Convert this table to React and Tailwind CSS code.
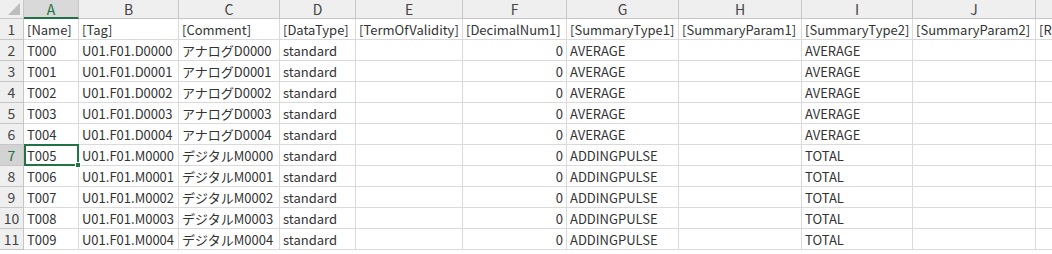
const cols = [
  { key: "A", w: "w-[55px]" },
  { key: "B", w: "w-[100px]" },
  { key: "C", w: "w-[101px]" },
  { key: "D", w: "w-[76px]" },
  { key: "E", w: "w-[107px]" },
  { key: "F", w: "w-[104px]" },
  { key: "G", w: "w-[112px]" },
  { key: "H", w: "w-[123px]" },
  { key: "I", w: "w-[111px]" },
  { key: "J", w: "w-[123px]" },
  { key: "K", w: "w-[60px]" },
];

const header = ["[Name]", "[Tag]", "[Comment]", "[DataType]", "[TermOfValidity]", "[DecimalNum1]", "[SummaryType1]", "[SummaryParam1]", "[SummaryType2]", "[SummaryParam2]", "[R"];

const makeRow = (i) => {
  const analog = i < 5;
  const n = analog ? i : i - 5;
  const num = String(n).padStart(4, "0");
  return [
    "T00" + i,
    analog ? "U01.F01.D" + num : "U01.F01.M" + num,
    analog ? "アナログD" + num : "デジタルM" + num,
    "standard",
    "",
    "0",
    analog ? "AVERAGE" : "ADDINGPULSE",
    "",
    analog ? "AVERAGE" : "TOTAL",
    "",
    "",
  ];
};

const rows = [header, ...Array.from({ length: 10 }, (_, i) => makeRow(i))];

export default function App() {
  return (
    <div
      className="w-[1052px] h-[254px] overflow-hidden bg-white text-[#333] text-[13px]"
      style={{ fontFamily: '"Noto Sans CJK JP", "Noto Sans", sans-serif' }}
    >
      {/* column letters */}
      <div className="flex h-[19px]">
        <div className="relative w-[24px] shrink-0 bg-[#efefef] border-r border-b border-[#c6c6c6]">
          <svg className="absolute right-[3px] bottom-[3px]" width="12" height="12" viewBox="0 0 12 12">
            <polygon points="12,0 12,12 0,12" fill="#bdbdbd" />
          </svg>
        </div>
        {cols.map((c) => (
          <div
            key={c.key}
            className={
              "shrink-0 flex items-center justify-center text-[14px] leading-none border-r " +
              c.w +
              (c.key === "A"
                ? " bg-[#d9d9d9] text-[#217346] border-b-2 border-b-[#217346] border-r-[#c6c6c6]"
                : " bg-[#efefef] text-[#444] border-b border-[#c6c6c6]")
            }
          >
            {c.key}
          </div>
        ))}
      </div>

      {rows.map((r, ri) => {
        const sel = ri === 6;
        return (
          <div key={ri} className="flex h-[21px]">
            <div
              className={
                "w-[24px] shrink-0 flex items-center justify-center text-[14px] border-r border-b border-[#c6c6c6] " +
                (sel ? "bg-[#d3d3d3] text-[#217346]" : "bg-[#efefef] text-[#444]")
              }
            >
              {ri + 1}
            </div>
            {cols.map((c, ci) => {
              const v = r[ci];
              const right = ri > 0 && ci === 5;
              return (
                <div
                  key={c.key}
                  className={
                    "relative shrink-0 flex items-center whitespace-nowrap border-r border-b border-[#dadada] px-[3px] leading-none " +
                    c.w +
                    (right ? " justify-end" : "")
                  }
                >
                  {v}
                  {sel && ci === 0 && (
                    <div className="absolute z-10 left-0 top-[-1px] w-[55px] h-[22px] border-2 border-[#217346]">
                      <div className="absolute right-[-4px] bottom-[-4px] w-[6px] h-[6px] bg-[#217346] border border-white" />
                    </div>
                  )}
                </div>
              );
            })}
          </div>
        );
      })}
    </div>
  );
}
